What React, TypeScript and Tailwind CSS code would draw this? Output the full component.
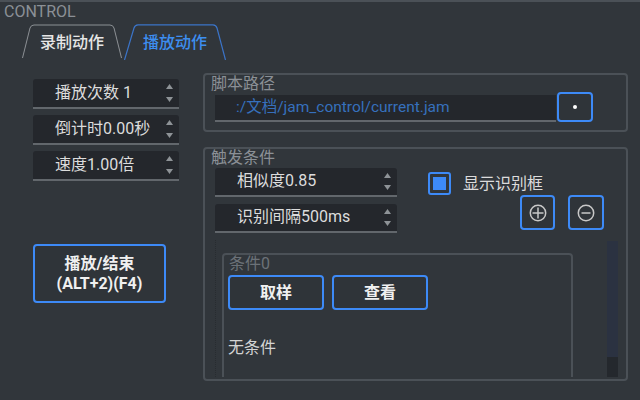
import React from "react";

const FONT = "font-['Roboto','Noto_Sans_CJK_SC',sans-serif]";

function Arrows() {
  return (
    <div className="flex w-[20px] flex-col items-center justify-between py-[5px]">
      <svg width="7" height="5" viewBox="0 0 7 5">
        <path d="M3.5 0 L7 5 L0 5 Z" fill="#8e9397" />
      </svg>
      <svg width="7" height="5" viewBox="0 0 7 5">
        <path d="M0 0 L7 0 L3.5 5 Z" fill="#8e9397" />
      </svg>
    </div>
  );
}

function Spin({ label, w, h }: { label: string; w: string; h: string }) {
  return (
    <div className={`flex ${w} ${h} rounded-t-[3px] border-b-2 border-[#62676c] bg-[#24272c]`}>
      <div className="flex flex-1 items-center pb-[1px] pl-[22px] text-[16px] text-[#dcdcdc]">{label}</div>
      <Arrows />
    </div>
  );
}

function BlueBtn({ className, children }: { className: string; children?: React.ReactNode }) {
  return (
    <div
      className={`flex items-center justify-center rounded-[4px] border-2 border-[#3d8af7] bg-[#2f3439] ${className}`}
    >
      {children}
    </div>
  );
}

export default function App() {
  return (
    <div
      className={`relative h-[400px] w-[640px] overflow-hidden border-t-2 border-[#4b5157] bg-[#31363b] ${FONT}`}
    >
      {/* header */}
      <div className="h-[20px] pl-[4px] text-[16px] leading-[20px] text-[#8b9096]">CONTROL</div>

      {/* tabs */}
      <div className="ml-[22px] mt-[2px] flex h-[36px] gap-[2px]">
        <div className="relative flex w-[100px] items-center justify-center pt-[2px] text-[16px] font-medium text-[#e6e6e6]">
          <svg className="absolute inset-0" width="100" height="36" viewBox="0 0 100 36">
            <path
              d="M0.5 34 L8 4 Q9 1 12 1 L88 1 Q91 1 92 4 L99.5 34"
              fill="none"
              stroke="#8c9195"
              strokeWidth="1"
            />
          </svg>
          <span className="relative">录制动作</span>
        </div>
        <div className="relative flex w-[102px] items-center justify-center pt-[2px] text-[16px] font-medium text-[#3d8ef0]">
          <svg className="absolute inset-0" width="102" height="36" viewBox="0 0 102 36">
            <path
              d="M0.5 36 L10 4 Q11 0.8 14 0.8 L89 0.8 Q92 0.8 93 4 L101.5 36"
              fill="none"
              stroke="#3b74c8"
              strokeWidth="1.2"
            />
          </svg>
          <span className="relative">播放动作</span>
        </div>
      </div>

      {/* content */}
      <div className="flex pl-[33px]">
        {/* left column */}
        <div className="mt-[19px] flex w-[146px] flex-col">
          <div className="flex flex-col gap-[6px]">
            <Spin label="播放次数 1" w="w-[146px]" h="h-[30px]" />
            <Spin label="倒计时0.00秒" w="w-[146px]" h="h-[30px]" />
            <Spin label="速度1.00倍" w="w-[146px]" h="h-[30px]" />
          </div>
          <BlueBtn className="mt-[63px] h-[59px] w-[133px] flex-col text-[16px] font-bold leading-[20px] text-[#f0f0f0]">
            <span>播放/结束</span>
            <span>(ALT+2)(F4)</span>
          </BlueBtn>
        </div>

        {/* right column */}
        <div className="ml-[24px] mt-[13px] flex w-[425px] flex-col">
          {/* script path group */}
          <div className="flex h-[59px] flex-col rounded-[4px] border-2 border-[#4b5157]">
            <div className="ml-[6px] h-[17px] text-[16px] leading-[17px] text-[#8b9096]">脚本路径</div>
            <div className="ml-[10px] flex h-[30px] items-end">
              <div className="flex h-[27px] w-[341px] items-center border-b-2 border-[#62676c] bg-[#24272c] pl-[21px] text-[15.5px] text-[#3670bd]">
                :/文档/jam_control/current.jam
              </div>
              <BlueBtn className="ml-[1px] h-[30px] w-[36px]">
                <div className="h-[4px] w-[4px] rounded-full bg-white" />
              </BlueBtn>
            </div>
          </div>

          {/* trigger group */}
          <div className="mt-[15px] flex h-[234px] flex-col rounded-[4px] border-2 border-[#4b5157]">
            <div className="ml-[6px] h-[19px] text-[16px] leading-[18px] text-[#8b9096]">触发条件</div>
            <div className="ml-[10px] flex">
              <div className="flex flex-col gap-[7px]">
                <Spin label="相似度0.85" w="w-[182px]" h="h-[29px]" />
                <Spin label="识别间隔500ms" w="w-[182px]" h="h-[29px]" />
              </div>
              <div className="flex flex-col">
                <div className="ml-[31px] mt-[4px] flex h-[23px] items-center">
                  <div className="flex h-[23px] w-[23px] items-center justify-center rounded-[3px] border-2 border-[#3d8af7]">
                    <div className="h-[13px] w-[13px] bg-[#3d8af7]" />
                  </div>
                  <span className="ml-[12px] text-[16px] text-[#dcdcdc]">显示识别框</span>
                </div>
                <div className="ml-[123px] flex gap-[13px]">
                  <BlueBtn className="h-[35px] w-[35px]">
                    <svg width="18" height="18" viewBox="0 0 18 18">
                      <circle cx="9" cy="9" r="7.7" fill="none" stroke="#c8c8c8" strokeWidth="1.5" />
                      <path d="M9 3.5 V14.5 M3.5 9 H14.5" stroke="#c8c8c8" strokeWidth="1.5" />
                    </svg>
                  </BlueBtn>
                  <BlueBtn className="h-[35px] w-[36px]">
                    <svg width="18" height="18" viewBox="0 0 18 18">
                      <circle cx="9" cy="9" r="7.7" fill="none" stroke="#c8c8c8" strokeWidth="1.5" />
                      <path d="M4.5 9 H13.5" stroke="#c8c8c8" strokeWidth="1.5" />
                    </svg>
                  </BlueBtn>
                </div>
              </div>
            </div>

            {/* scroll area */}
            <div className="ml-[10px] mt-[7px] flex h-[137px] w-[405px] overflow-hidden border-l border-dotted border-[#282c30]">
              <div className="ml-[6px] mt-[13px] flex h-[140px] w-[351px] shrink-0 flex-col rounded-[4px] border-2 border-[#4b5157]">
                <div className="ml-[5px] h-[18px] text-[16px] leading-[18px] text-[#6c7278]">条件0</div>
                <div className="ml-[4px] mt-[2px] flex gap-[8px]">
                  <BlueBtn className="h-[35px] w-[96px] text-[16px] font-semibold text-[#f0f0f0]">取样</BlueBtn>
                  <BlueBtn className="h-[35px] w-[96px] text-[16px] font-semibold text-[#f0f0f0]">查看</BlueBtn>
                </div>
                <div className="ml-[4px] mt-[28px] h-[20px] text-[16px] leading-[20px] text-[#d4d4d4]">无条件</div>
              </div>
              <div className="ml-auto mr-[2px] mt-[1px] flex h-[136px] w-[11px] flex-col">
                <div className="h-[116px] bg-[#2b3241]" />
                <div className="flex-1 bg-[#24282d]" />
              </div>
            </div>
          </div>
        </div>
      </div>
    </div>
  );
}
